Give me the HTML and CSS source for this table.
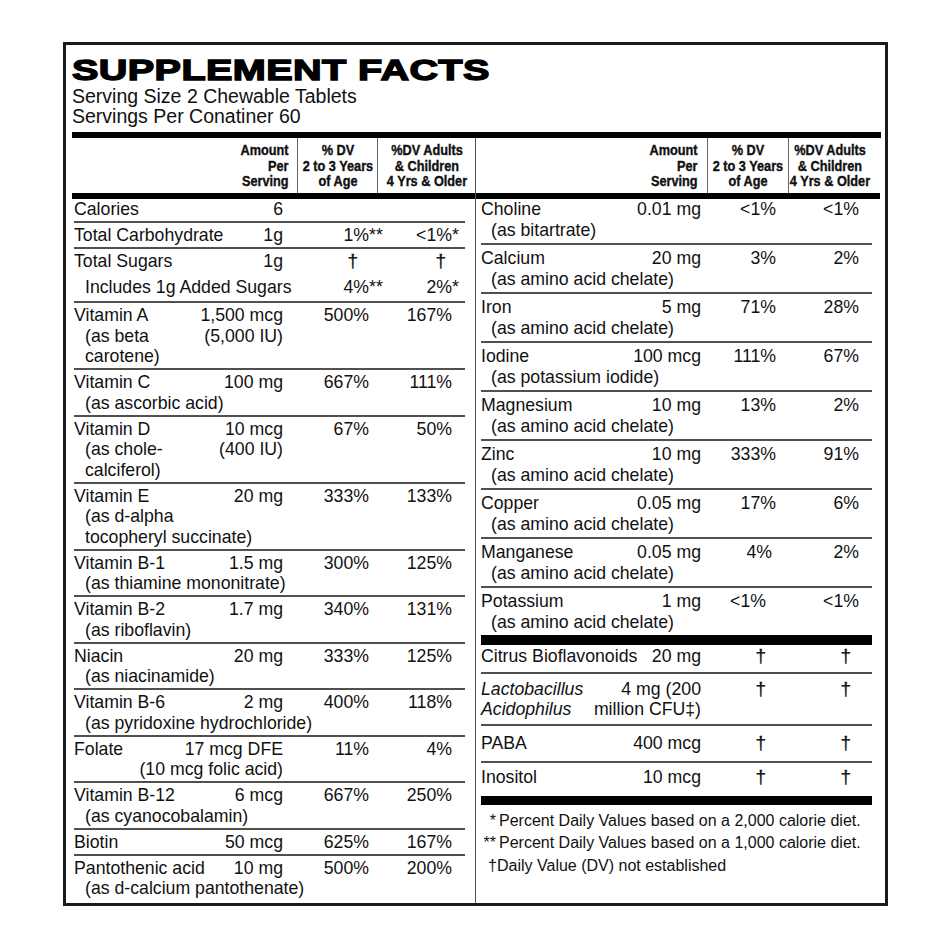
FILE: index.html
```html
<!DOCTYPE html>
<html lang="en">
<head>
<meta charset="utf-8">
<title>Supplement Facts</title>
<link rel="stylesheet" href="styles.css">
</head>
<body>
<div class="label">
  <h1 class="title"><span>SUPPLEMENT FACTS</span></h1>
  <p class="serving">Serving Size 2 Chewable Tablets<br>Servings Per Conatiner 60</p>
  <div class="facts">
    <section class="col col-left">
      <div class="thead">
        <div class="th th-amt"><span>Amount<br>Per<br>Serving</span></div>
        <div class="th th-dv"><span>% DV<br>2 to 3 Years<br>of Age</span></div>
        <div class="th th-ad"><span>%DV Adults<br>&amp; Children<br>4 Yrs &amp; Older</span></div>
      </div>
      <div class="row first">
        <div class="name">Calories</div><div class="amt">6</div><div class="dv"></div><div class="ad"></div>
      </div>
      <div class="row">
        <div class="name">Total Carbohydrate</div><div class="amt">1g</div><div class="dv">1%<span class="ast">**</span></div><div class="ad">&lt;1%<span class="ast">*</span></div>
      </div>
      <div class="row sugars">
        <div class="name">Total Sugars</div><div class="amt">1g</div><div class="dv dg">†</div><div class="ad dg">†</div>
        <div class="sub2 l2">Includes 1g Added Sugars</div><div class="dv l2">4%<span class="ast">**</span></div><div class="ad l2">2%<span class="ast">*</span></div>
      </div>
      <div class="row">
        <div class="name">Vitamin A<span class="ind">(as beta</span><span class="ind">carotene)</span></div><div class="amt">1,500 mcg<br>(5,000 IU)</div><div class="dv">500%</div><div class="ad">167%</div>
      </div>
      <div class="row">
        <div class="name">Vitamin C</div><div class="amt">100 mg</div><div class="dv">667%</div><div class="ad">111%</div>
        <div class="sub">(as ascorbic acid)</div>
      </div>
      <div class="row">
        <div class="name">Vitamin D<span class="ind">(as chole-</span><span class="ind">calciferol)</span></div><div class="amt">10 mcg<br>(400 IU)</div><div class="dv">67%</div><div class="ad">50%</div>
      </div>
      <div class="row">
        <div class="name">Vitamin E</div><div class="amt">20 mg</div><div class="dv">333%</div><div class="ad">133%</div>
        <div class="sub">(as d-alpha</div>
        <div class="sub">tocopheryl succinate)</div>
      </div>
      <div class="row">
        <div class="name">Vitamin B-1</div><div class="amt">1.5 mg</div><div class="dv">300%</div><div class="ad">125%</div>
        <div class="sub">(as thiamine mononitrate)</div>
      </div>
      <div class="row">
        <div class="name">Vitamin B-2</div><div class="amt">1.7 mg</div><div class="dv">340%</div><div class="ad">131%</div>
        <div class="sub">(as riboflavin)</div>
      </div>
      <div class="row">
        <div class="name">Niacin</div><div class="amt">20 mg</div><div class="dv">333%</div><div class="ad">125%</div>
        <div class="sub">(as niacinamide)</div>
      </div>
      <div class="row">
        <div class="name">Vitamin B-6</div><div class="amt">2 mg</div><div class="dv">400%</div><div class="ad">118%</div>
        <div class="sub">(as pyridoxine hydrochloride)</div>
      </div>
      <div class="row">
        <div class="name">Folate</div><div class="amt">17 mcg DFE<br>(10 mcg folic acid)</div><div class="dv">11%</div><div class="ad">4%</div>
      </div>
      <div class="row">
        <div class="name">Vitamin B-12</div><div class="amt">6 mcg</div><div class="dv">667%</div><div class="ad">250%</div>
        <div class="sub">(as cyanocobalamin)</div>
      </div>
      <div class="row">
        <div class="name">Biotin</div><div class="amt">50 mcg</div><div class="dv">625%</div><div class="ad">167%</div>
      </div>
      <div class="row last">
        <div class="name">Pantothenic acid</div><div class="amt">10 mg</div><div class="dv">500%</div><div class="ad">200%</div>
        <div class="sub">(as d-calcium pantothenate)</div>
      </div>
    </section>

    <section class="col col-right">
      <div class="thead">
        <div class="th th-amt"><span>Amount<br>Per<br>Serving</span></div>
        <div class="th th-dv"><span>% DV<br>2 to 3 Years<br>of Age</span></div>
        <div class="th th-ad"><span>%DV Adults<br>&amp; Children<br>4 Yrs &amp; Older</span></div>
      </div>
      <div class="row first">
        <div class="name">Choline</div><div class="amt">0.01 mg</div><div class="dv">&lt;1%</div><div class="ad">&lt;1%</div>
        <div class="sub">(as bitartrate)</div>
      </div>
      <div class="row">
        <div class="name">Calcium</div><div class="amt">20 mg</div><div class="dv">3%</div><div class="ad">2%</div>
        <div class="sub">(as amino acid chelate)</div>
      </div>
      <div class="row">
        <div class="name">Iron</div><div class="amt">5 mg</div><div class="dv">71%</div><div class="ad">28%</div>
        <div class="sub">(as amino acid chelate)</div>
      </div>
      <div class="row">
        <div class="name">Iodine</div><div class="amt">100 mcg</div><div class="dv">111%</div><div class="ad">67%</div>
        <div class="sub">(as potassium iodide)</div>
      </div>
      <div class="row">
        <div class="name">Magnesium</div><div class="amt">10 mg</div><div class="dv">13%</div><div class="ad">2%</div>
        <div class="sub">(as amino acid chelate)</div>
      </div>
      <div class="row">
        <div class="name">Zinc</div><div class="amt">10 mg</div><div class="dv">333%</div><div class="ad">91%</div>
        <div class="sub">(as amino acid chelate)</div>
      </div>
      <div class="row">
        <div class="name">Copper</div><div class="amt">0.05 mg</div><div class="dv">17%</div><div class="ad">6%</div>
        <div class="sub">(as amino acid chelate)</div>
      </div>
      <div class="row">
        <div class="name">Manganese</div><div class="amt">0.05 mg</div><div class="dv s4">4%</div><div class="ad">2%</div>
        <div class="sub">(as amino acid chelate)</div>
      </div>
      <div class="row potassium">
        <div class="name">Potassium</div><div class="amt">1 mg</div><div class="dv s10">&lt;1%</div><div class="ad">&lt;1%</div>
        <div class="sub">(as amino acid chelate)</div>
      </div>
      <div class="row citrus">
        <div class="name">Citrus Bioflavonoids</div><div class="amt">20 mg</div><div class="dv dg">†</div><div class="ad dg">†</div>
      </div>
      <div class="row lacto">
        <div class="name"><em>Lactobacillus<br>Acidophilus</em></div><div class="amt">4 mg (200<br>million CFU‡)</div><div class="dv dg">†</div><div class="ad dg">†</div>
      </div>
      <div class="row paba">
        <div class="name">PABA</div><div class="amt">400 mcg</div><div class="dv dg">†</div><div class="ad dg">†</div>
      </div>
      <div class="row inositol">
        <div class="name">Inositol</div><div class="amt">10 mcg</div><div class="dv dg">†</div><div class="ad dg">†</div>
      </div>
      <div class="notes">
        <p><span class="mark">*</span>Percent Daily Values based on a 2,000 calorie diet.</p>
        <p><span class="mark">**</span>Percent Daily Values based on a 1,000 calorie diet.</p>
        <p><span class="mark mark-dg">†</span>Daily Value (DV) not established</p>
      </div>
    </section>
  </div>
</div>
</body>
</html>
```

FILE: styles.css
```css
* {
  box-sizing: border-box;
  margin: 0;
  padding: 0;
}

body {
  background: #fff;
  color: #111;
  font-family: "Liberation Sans", Arial, sans-serif;
}

.label {
  width: 825px;
  margin: 42px 0 0 63px;
  border: 3px solid #1b1b1b;
  padding: 0 4px 0 6px;
}

.title {
  margin-top: 9px;
  height: 31px;
  font-size: 30px;
  line-height: 31px;
  font-weight: 700;
  color: #000;
  white-space: nowrap;
}

.title span {
  display: inline-block;
  transform: scaleX(1.32);
  transform-origin: 0 50%;
  -webkit-text-stroke: 1.4px #000;
  letter-spacing: 0.3px;
}

.serving {
  margin-top: 1px;
  font-size: 19.5px;
  line-height: 20px;
}

.facts {
  display: flex;
  margin-top: 6px;
  border-top: 6px solid #000;
}

.col {
  width: 404px;
  display: flex;
  flex-direction: column;
}

.col-left {
  border-right: 1px solid #555;
}

/* header */
.thead {
  display: grid;
  border-bottom: 6px solid #000;
  font-weight: 700;
  font-size: 15.5px;
  line-height: 15.5px;
  color: #111;
}

.col-left .thead {
  grid-template-columns: 226px 80px 98px;
}

.col-right .thead {
  grid-template-columns: 232px 81px 82px;
  padding-right: 9px;
}

.th {
  padding: 4px 0 4.5px;
  text-align: center;
  white-space: nowrap;
}

.th span {
  display: inline-block;
  transform: scaleX(0.82);
  transform-origin: 50% 50%;
  margin: 0 -20px;
  -webkit-text-stroke: 0.4px #111;
}

.th-amt {
  text-align: right;
  padding-right: 8px;
  border-right: 1px solid #666;
}

.col-right .th-amt {
  padding-right: 9px;
}

.th-amt span {
  transform-origin: 100% 50%;
  margin: 0 0 0 -20px;
}

.th-dv {
  border-right: 1px solid #666;
}

/* body rows */
.row {
  display: grid;
  font-size: 17.7px;
  line-height: 20.5px;
  border-bottom: 2px solid #505050;
  white-space: nowrap;
}

.col-left .row {
  margin: 0 10px 0 2px;
  grid-template-columns: minmax(0, 1fr) auto 86px 83px;
  padding: 1.75px 13px 1.75px 0;
}

.col-right .row {
  margin: 0 8px 0 5px;
  grid-template-columns: minmax(0, 1fr) auto 75px 83px;
  padding: 3.5px 13px 2.5px 0;
}

.col-left .row.first,
.col-right .row.first {
  padding-top: 0;
}

.col-left .row.sugars {
  padding-bottom: 3.75px;
}

.col-left .row.last {
  border-bottom: none;
  padding-bottom: 4px;
}

.amt,
.dv,
.ad {
  text-align: right;
}

.sub {
  grid-column: 1 / -1;
  padding-left: 11px;
}

.col-right .sub {
  padding-left: 10px;
}

.sub2 {
  grid-column: 1 / 3;
  padding-left: 11px;
}

.l2 {
  padding-top: 5.5px;
}

.ind {
  display: block;
  padding-left: 11px;
}

.ast {
  display: inline-block;
  width: 0;
  white-space: nowrap;
}

.dg {
  font-size: 19px;
  -webkit-text-stroke: 0.3px #111;
}

.col-left .dv.dg {
  padding-right: 11px;
}

.col-left .ad.dg {
  padding-right: 6px;
}

.col-right .dv.dg {
  padding-right: 10px;
}

.col-right .ad.dg {
  padding-right: 8px;
}

.dv.s4 {
  padding-right: 4px;
}

.dv.s10 {
  padding-right: 10px;
}

.col-right .row.potassium {
  padding-bottom: 3px;
  border-bottom: 10px solid #000;
}

.col-right .row.citrus {
  padding-top: 1px;
  padding-bottom: 5.5px;
}

.col-right .row.lacto {
  padding-top: 4.75px;
  padding-bottom: 4.25px;
}

.col-right .row.paba {
  padding-top: 7.25px;
  padding-bottom: 7.25px;
}

.col-right .row.inositol {
  padding-top: 3.75px;
  padding-bottom: 8.75px;
  border-bottom: 9px solid #000;
}

.notes {
  margin: 0 8px 0 5px;
  padding-top: 4.75px;
  font-size: 16px;
  line-height: 22.5px;
  white-space: nowrap;
}

.mark {
  display: inline-block;
  width: 18px;
  text-align: right;
  padding-right: 3px;
}

.mark-dg {
  width: 16px;
  padding-right: 0;
}
```
